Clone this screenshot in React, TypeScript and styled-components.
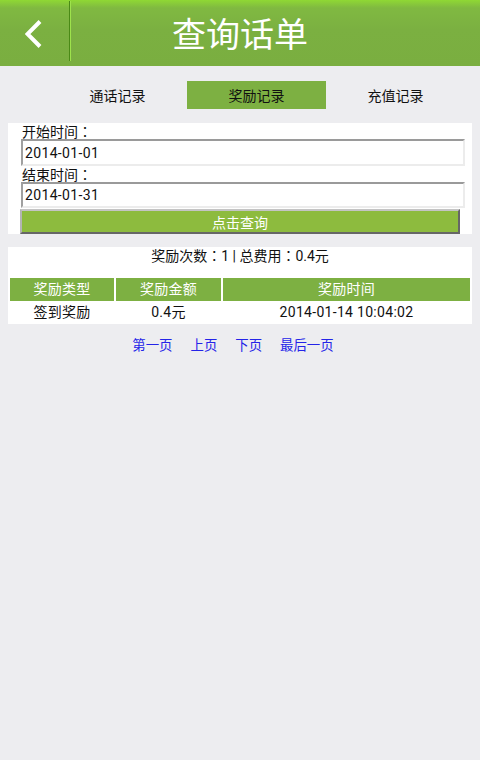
import React from "react";
import styled, { createGlobalStyle } from "styled-components";

const GlobalStyle = createGlobalStyle`
  html, body {
    margin: 0;
    padding: 0;
    background: #ededf0;
  }
  body {
    font-family: Roboto, "Noto Sans CJK SC", "Noto Sans", sans-serif;
    color: #111;
    -webkit-font-smoothing: antialiased;
  }
  * { box-sizing: border-box; }
`;

const Page = styled.div`
  width: 480px;
  min-height: 760px;
  background: #ededf0;
`;

const Header = styled.header`
  height: 66px;
  display: grid;
  grid-template-columns: 69px 2px 1fr 71px;
  align-items: center;
  background: linear-gradient(to bottom, #8fd834 0px, #80b941 8px, #7bb041 30px, #7aae40 100%);
`;

const BackButton = styled.button`
  height: 66px;
  border: 0;
  padding: 0;
  background: transparent;
  display: flex;
  align-items: center;
  justify-content: center;
  cursor: pointer;
  svg { display: block; }
`;

const Divider = styled.div`
  height: 60px;
  margin-top: -4px;
  display: flex;
  span:first-child { width: 1px; background: #4a8a16; }
  span:last-child { width: 1px; background: #9ee24c; }
`;

const Title = styled.h1`
  margin: 0;
  text-align: center;
  color: #fff;
  font-size: 34px;
  font-weight: 400;
  line-height: 40px;
  font-family: "Noto Sans CJK SC", sans-serif;
  margin-top: -1px;
`;

const Tabs = styled.nav`
  margin-top: 15px;
  padding-left: 48px;
  display: flex;
  height: 28px;
`;

const Tab = styled.div<{ $active?: boolean }>`
  width: 139px;
  height: 28px;
  line-height: 28px;
  text-align: center;
  font-size: 14px;
  font-family: "Noto Sans CJK SC", sans-serif;
  color: #111;
  background: ${(p) => (p.$active ? "#7db042" : "transparent")};
`;

const Panel = styled.section`
  margin: 0 8px;
  background: #fff;
`;

const FormPanel = styled(Panel)`
  margin-top: 14px;
  height: 111px;
  display: flex;
  flex-direction: column;
`;

const Label = styled.div`
  height: 16px;
  line-height: 16px;
  padding-left: 14px;
  font-size: 14px;
  font-family: "Noto Sans CJK SC", sans-serif;
  color: #111;
`;

const Colon = styled.span`
  font-family: "Noto Sans CJK TC", sans-serif;
`;

const DateInput = styled.input<{ $h: number }>`
  margin-left: 13px;
  width: 444px;
  height: ${(p) => p.$h}px;
  border-style: solid;
  border-width: 2px;
  border-color: #9a9a9a #ececec #ececec #a0a0a0;
  padding: 0 0 0 2px;
  font-size: 14px;
  letter-spacing: 0.35px;
  font-family: Roboto, sans-serif;
  color: #111;
  background: #fff;
  outline: none;
`;

const QueryButton = styled.button`
  margin: 1px 0 0 12px;
  width: 440px;
  height: 25px;
  border-style: solid;
  border-width: 2px;
  border-color: #c4c4c4 #666 #666 #b4b4b4;
  background: #8dbb3e;
  color: #fff;
  font-size: 14px;
  line-height: 20px;
  padding: 0;
  font-family: "Noto Sans CJK SC", sans-serif;
`;

const ResultPanel = styled(Panel)`
  margin-top: 13px;
  padding: 0 2px 1px;
`;

const Summary = styled.div`
  height: 31px;
  line-height: 17px;
  text-align: center;
  font-size: 14px;
  color: #111;
`;

const Row = styled.div<{ $head?: boolean }>`
  display: grid;
  grid-template-columns: 104px 105px 1fr;
  column-gap: 2px;
  height: ${(p) => (p.$head ? 23 : 22)}px;
`;

const Cell = styled.div<{ $head?: boolean }>`
  text-align: center;
  font-size: 14px;
  letter-spacing: 0.3px;
  line-height: ${(p) => (p.$head ? 23 : 22)}px;
  color: ${(p) => (p.$head ? "#fff" : "#111")};
  background: ${(p) => (p.$head ? "#7db042" : "#fff")};
`;

const Pager = styled.div`
  margin-top: 10px;
  padding-right: 14px;
  display: flex;
  justify-content: center;
  gap: 18px;
  line-height: 20px;
`;

const PageLink = styled.a`
  font-size: 13.4px;
  color: #2424e8;
  text-decoration: none;
  font-family: "Noto Sans CJK SC", sans-serif;
`;

export default function App() {
  return (
    <Page>
      <GlobalStyle />
      <Header>
        <BackButton aria-label="返回">
          <svg width="20" height="32" viewBox="0 0 20 32">
            <polyline
              points="15,1.5 2.5,14 15,26.5"
              fill="none"
              stroke="#fff"
              strokeWidth="4"
              strokeLinecap="butt"
              strokeLinejoin="miter"
              transform="translate(0,3)"
            />
          </svg>
        </BackButton>
        <Divider>
          <span />
          <span />
        </Divider>
        <Title>查询话单</Title>
        <div />
      </Header>

      <Tabs>
        <Tab>通话记录</Tab>
        <Tab $active>奖励记录</Tab>
        <Tab>充值记录</Tab>
      </Tabs>

      <FormPanel>
        <Label>
          开始时间<Colon>：</Colon>
        </Label>
        <DateInput $h={27} defaultValue="2014-01-01" />
        <Label>
          结束时间<Colon>：</Colon>
        </Label>
        <DateInput $h={26} defaultValue="2014-01-31" />
        <QueryButton>点击查询</QueryButton>
      </FormPanel>

      <ResultPanel>
        <Summary>
          奖励次数<Colon>：</Colon>1 | 总费用<Colon>：</Colon>0.4元
        </Summary>
        <Row $head>
          <Cell $head>奖励类型</Cell>
          <Cell $head>奖励金额</Cell>
          <Cell $head>奖励时间</Cell>
        </Row>
        <Row>
          <Cell>签到奖励</Cell>
          <Cell>0.4元</Cell>
          <Cell>2014-01-14 10:04:02</Cell>
        </Row>
      </ResultPanel>

      <Pager>
        <PageLink href="#">第一页</PageLink>
        <PageLink href="#">上页</PageLink>
        <PageLink href="#">下页</PageLink>
        <PageLink href="#">最后一页</PageLink>
      </Pager>
    </Page>
  );
}
